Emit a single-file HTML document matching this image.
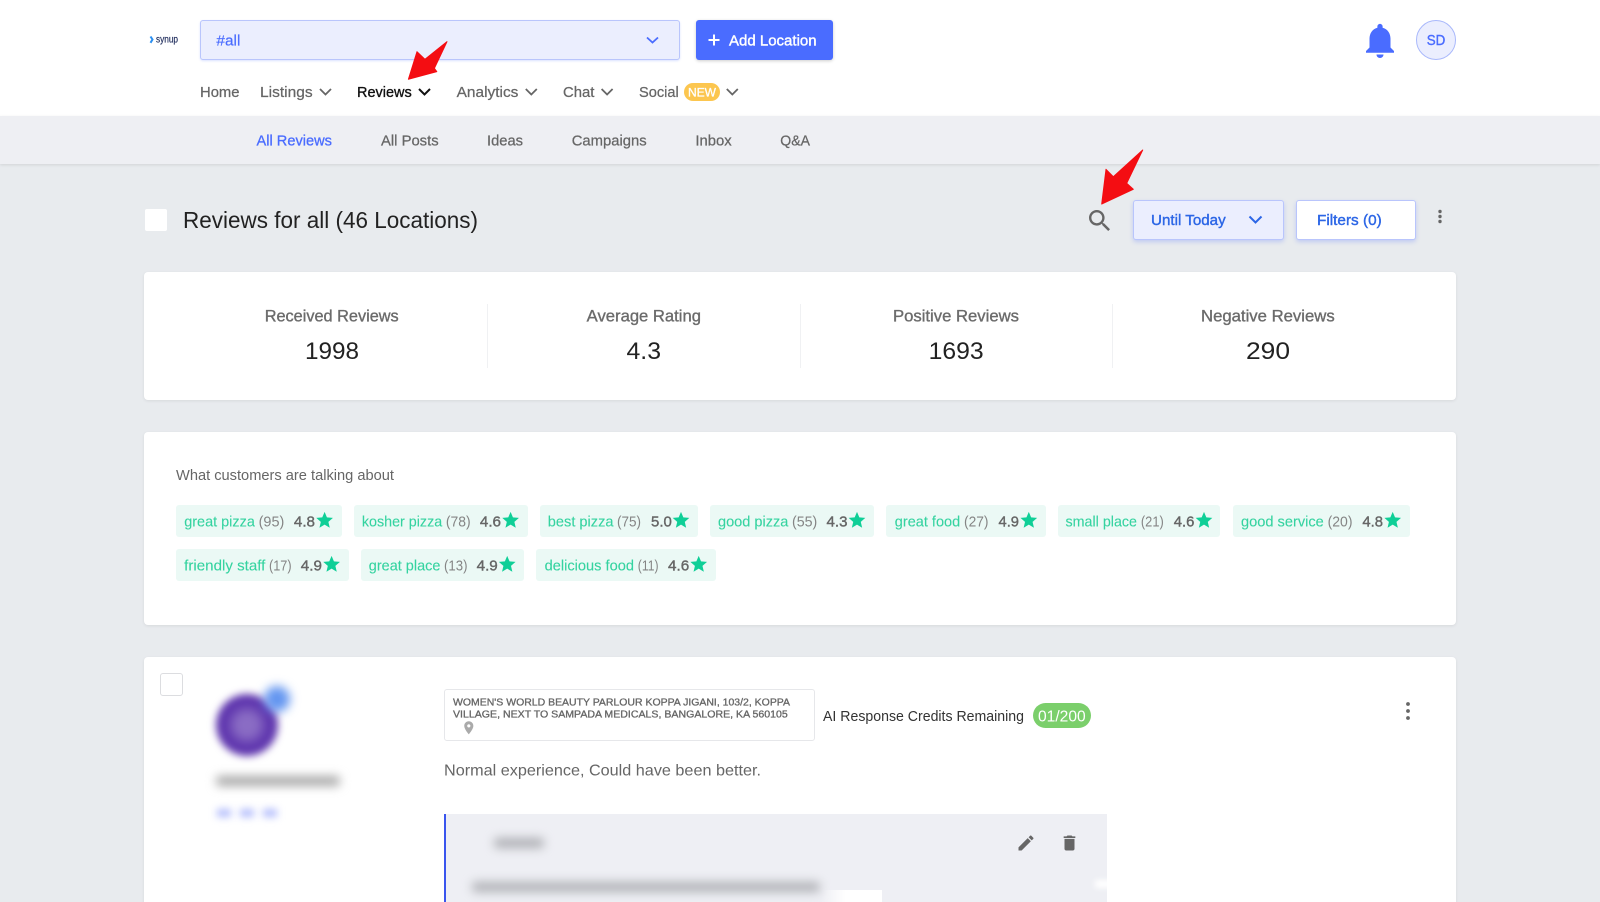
<!DOCTYPE html>
<html lang="en">
<head>
<meta charset="utf-8">
<title>Reviews</title>
<style>
html,body{margin:0;padding:0;width:1600px;height:902px;overflow:hidden;background:#e8ebee;font-family:"Liberation Sans",sans-serif}
#page{position:relative;width:1600px;height:902px;overflow:hidden;background:#e8ebee}
.b{position:absolute;box-sizing:border-box}
svg.t{position:absolute;left:0;top:0;width:1600px;height:902px}
svg text{font-family:"Liberation Sans",sans-serif;font-size:14px;fill:#666}
.n{font-size:15px;fill:#666;stroke:#666;stroke-width:.25px}
.sub{font-size:15px;fill:#666;stroke:#666;stroke-width:.25px}
.tg{fill:#35d3a0;font-size:15px;stroke:#35d3a0;stroke-width:.1px}
.ct{fill:#858585;font-size:15px}
.rt{fill:#666;font-size:15px;stroke:#666;stroke-width:.4px}
.h{font-size:16.300px;fill:#6b6b6b;stroke:#6b6b6b;stroke-width:.35px}
.v{font-size:24.500px;fill:#222}
.tag{background:#ebf9f5;border-radius:3px;height:32px}
.card{background:#fff;border-radius:4px;box-shadow:0 1px 3px rgba(0,0,0,.08)}
</style>
</head>
<body>
<div id="page">
<div class="b" style="left:0;top:0;width:1600px;height:116px;background:#fff"></div>
<div class="b" style="left:0;top:116px;width:1600px;height:48px;background:#eeeff3;box-shadow:0 1px 3px rgba(0,0,0,.1)"></div>

<div class="b" style="left:200px;top:20px;width:480px;height:40px;background:#ebeefe;border:1px solid #b9c5fc;border-radius:3px;box-shadow:0 1px 2px rgba(74,108,255,.2)"></div>
<div class="b" style="left:696px;top:20px;width:137px;height:40px;background:#4a6cff;border-radius:3px;box-shadow:0 1px 3px rgba(0,0,0,.2)"></div>
<div class="b" style="left:684px;top:83px;width:36px;height:18px;background:#fcc64f;border-radius:9px"></div>
<div class="b" style="left:1416px;top:20px;width:40px;height:40px;background:#ebeefe;border:1px solid #a9b8fb;border-radius:50%"></div>

<div class="b" style="left:144.500px;top:209px;width:22px;height:22px;background:#fff;border-radius:2px"></div>
<div class="b" style="left:1133px;top:200px;width:151px;height:40px;background:#ebeefe;border:1px solid #b9c5fc;border-radius:3px;box-shadow:0 2px 4px rgba(74,108,255,.25)"></div>
<div class="b" style="left:1296px;top:200px;width:120px;height:40px;background:#fff;border:1px solid #b9c5fc;border-radius:3px;box-shadow:0 2px 4px rgba(74,108,255,.25)"></div>

<div class="b card" style="left:144px;top:272px;width:1312px;height:128px"></div>
<div class="b" style="left:487px;top:304px;width:1px;height:64px;background:#f0f1f3"></div>
<div class="b" style="left:800px;top:304px;width:1px;height:64px;background:#f0f1f3"></div>
<div class="b" style="left:1112px;top:304px;width:1px;height:64px;background:#f0f1f3"></div>

<div class="b card" style="left:144px;top:432px;width:1312px;height:193px"></div>
<div class="b tag" style="left:176px;top:505px;width:166px"></div>
<div class="b tag" style="left:354px;top:505px;width:174px"></div>
<div class="b tag" style="left:540px;top:505px;width:158px"></div>
<div class="b tag" style="left:710px;top:505px;width:164px"></div>
<div class="b tag" style="left:886px;top:505px;width:160px"></div>
<div class="b tag" style="left:1058px;top:505px;width:162px"></div>
<div class="b tag" style="left:1233px;top:505px;width:177px"></div>
<div class="b tag" style="left:176px;top:549px;width:172.500px"></div>
<div class="b tag" style="left:360.500px;top:549px;width:163.500px"></div>
<div class="b tag" style="left:536px;top:549px;width:179.500px"></div>

<div class="b card" style="left:144px;top:657px;width:1312px;height:260px"></div>
<div class="b" style="left:160px;top:673px;width:23px;height:23px;background:#fff;border:1px solid #dcdde0;border-radius:3px"></div>
<div class="b" style="left:216px;top:694px;width:62px;height:62px;border-radius:50%;background:radial-gradient(circle,#8a6cc4 0 22%,#5f36ae 50%);filter:blur(4px)"></div>
<div class="b" style="left:264px;top:686px;width:26px;height:26px;border-radius:50%;background:#6496f0;filter:blur(5px)"></div>
<div class="b" style="left:216px;top:776px;width:124px;height:10px;background:#a8a8a8;filter:blur(5px);border-radius:4px"></div>
<div class="b" style="left:217px;top:809px;width:14px;height:8px;background:#b3bdfc;filter:blur(4px)"></div>
<div class="b" style="left:240px;top:809px;width:14px;height:8px;background:#b3bdfc;filter:blur(4px)"></div>
<div class="b" style="left:263px;top:809px;width:14px;height:8px;background:#b3bdfc;filter:blur(4px)"></div>
<div class="b" style="left:444px;top:689px;width:371px;height:52px;background:#fff;border:1px solid #e6e7ea;border-radius:3px"></div>
<div class="b" style="left:1033px;top:703px;width:58px;height:25px;background:#7bcf6b;border-radius:13px"></div>

<div class="b" style="left:444px;top:814px;width:663px;height:88px;background:#eeeff4;border-left:2px solid #3a55ee"></div>
<div class="b" style="left:821px;top:890px;width:61px;height:12px;background:linear-gradient(90deg,rgba(255,255,255,0),#fff 40%)"></div>
<div class="b" style="left:494px;top:838px;width:50px;height:10px;background:#aeafb4;filter:blur(5px);border-radius:4px"></div>
<div class="b" style="left:472px;top:882px;width:348px;height:10px;background:#b0b1b6;filter:blur(5px);border-radius:4px"></div>
<div class="b" style="left:1095px;top:880px;width:20px;height:8px;background:#fff;filter:blur(3px)"></div>

<svg class="t" viewBox="0 0 1600 902" xmlns="http://www.w3.org/2000/svg">
<defs>
<symbol id="star" viewBox="0 0 24 24"><path d="M12 17.270L18.180 21l-1.640-7.030L22 9.240l-7.190-.61L12 2 9.190 8.630 2 9.240l5.460 4.730L5.820 21z" fill="#0fcf97"/></symbol>
</defs>

<!-- logo -->
<path d="M150.500 36.500 L152.500 39.500 L150.500 42.800" fill="none" stroke="#2b8ff0" stroke-width="2"/>
<text x="156" y="42.500" textLength="22" lengthAdjust="spacingAndGlyphs" style="font-size:10px;fill:#23305f;stroke:#23305f;stroke-width:.2px">synup</text>

<!-- selector -->
<text x="216.400" y="45.500" textLength="24" lengthAdjust="spacingAndGlyphs" style="font-size:15px;fill:#4a6cff;stroke:#4a6cff;stroke-width:.2px">#all</text>
<path d="M647 37.500l5.500 5 5.500-5" fill="none" stroke="#4a6cff" stroke-width="1.800"/>
<path d="M714 34.500v11M708.500 40h11" stroke="#fff" stroke-width="2"/>
<text x="729" y="45.300" textLength="87.600" lengthAdjust="spacingAndGlyphs" style="font-size:15px;fill:#fff;stroke:#fff;stroke-width:.4px">Add Location</text>

<!-- nav -->
<text x="200" y="97.200" textLength="39.500" lengthAdjust="spacingAndGlyphs" class="n">Home</text>
<text x="260" y="97.200" textLength="52.600" lengthAdjust="spacingAndGlyphs" class="n">Listings</text>
<text x="357" y="97.200" textLength="54.700" lengthAdjust="spacingAndGlyphs" style="font-size:15px;fill:#111;stroke:#111;stroke-width:.35px">Reviews</text>
<text x="456.600" y="97.200" textLength="61.800" lengthAdjust="spacingAndGlyphs" class="n">Analytics</text>
<text x="563" y="97.200" textLength="31.400" lengthAdjust="spacingAndGlyphs" class="n">Chat</text>
<text x="639" y="97.200" textLength="39.800" lengthAdjust="spacingAndGlyphs" class="n">Social</text>
<text x="688" y="96.500" textLength="28" lengthAdjust="spacingAndGlyphs" style="font-size:12px;fill:#fff;stroke:#fff;stroke-width:.3px">NEW</text>
<g fill="none" stroke="#666" stroke-width="1.800">
<path d="M320 89l5.500 5.500 5.500-5.500"/>
<path d="M525.800 89l5.500 5.500 5.500-5.500"/>
<path d="M601.600 89l5.500 5.500 5.500-5.500"/>
<path d="M726.800 89l5.500 5.500 5.500-5.500"/>
</g>
<path d="M419 89l5.500 5.500 5.500-5.500" fill="none" stroke="#111" stroke-width="2"/>

<!-- sub nav -->
<text x="256.500" y="145.300" textLength="75.500" lengthAdjust="spacingAndGlyphs" style="font-size:15px;fill:#4a6cff;stroke:#4a6cff;stroke-width:.3px">All Reviews</text>
<text x="381" y="145.300" textLength="57.600" lengthAdjust="spacingAndGlyphs" class="sub">All Posts</text>
<text x="487" y="145.300" textLength="36" lengthAdjust="spacingAndGlyphs" class="sub">Ideas</text>
<text x="571.700" y="145.300" textLength="75" lengthAdjust="spacingAndGlyphs" class="sub">Campaigns</text>
<text x="695.400" y="145.300" textLength="36.300" lengthAdjust="spacingAndGlyphs" class="sub">Inbox</text>
<text x="780.300" y="145.300" textLength="29.700" lengthAdjust="spacingAndGlyphs" class="sub">Q&amp;A</text>

<!-- top right -->
<svg x="1359" y="19.500" width="42" height="42" viewBox="0 0 24 24"><path fill="#4a6cff" d="M12 22c1.100 0 2-.9 2-2h-4c0 1.100.9 2 2 2zm6-6v-5c0-3.070-1.630-5.640-4.500-6.320V4c0-.83-.67-1.500-1.500-1.500s-1.500.67-1.500 1.500v.68C7.640 5.360 6 7.920 6 11v5l-2 2v1h16v-1l-2-2z"/></svg>
<text x="1426.700" y="45.200" textLength="18.600" lengthAdjust="spacingAndGlyphs" style="font-size:14.500px;fill:#4a6cff;stroke:#4a6cff;stroke-width:.4px">SD</text>

<!-- arrows -->
<polygon fill="#f40d12" stroke="#f40d12" stroke-width="1" stroke-linejoin="round" points="447,41.700 434.400,68.300 436.800,71.700 408.400,79.300 417,51.700 425,59.300"/>
<polygon fill="#f40d12" stroke="#f40d12" stroke-width="1" stroke-linejoin="round" points="1142.700,150 1126.700,183.300 1133.300,189.300 1101.700,204 1106,169.300 1113.300,176.700"/>

<!-- title row -->
<text x="183" y="228" textLength="295" lengthAdjust="spacingAndGlyphs" style="font-size:23px;fill:#222">Reviews for all (46 Locations)</text>
<svg x="1085.400" y="206.400" width="28.800" height="28.800" viewBox="0 0 24 24"><path fill="#666" d="M15.500 14h-.79l-.28-.27C15.410 12.590 16 11.110 16 9.500 16 5.910 13.090 3 9.500 3S3 5.910 3 9.500 5.910 16 9.500 16c1.610 0 3.090-.59 4.230-1.570l.27.28v.79l5 4.990L20.490 19l-4.990-5zm-6 0C7.010 14 5 11.990 5 9.500S7.010 5 9.500 5 14 7.010 14 9.500 11.990 14 9.500 14z"/></svg>
<text x="1151" y="225.200" textLength="74.700" lengthAdjust="spacingAndGlyphs" style="font-size:15px;fill:#2c66e6;stroke:#2c66e6;stroke-width:.4px">Until Today</text>
<path d="M1249.500 216.500l6 6 6-6" fill="none" stroke="#2c66e6" stroke-width="2"/>
<text x="1317" y="225.200" textLength="64.700" lengthAdjust="spacingAndGlyphs" style="font-size:15px;fill:#2c66e6;stroke:#2c66e6;stroke-width:.4px">Filters (0)</text>
<g fill="#666"><circle cx="1440" cy="211.500" r="1.700"/><circle cx="1440" cy="216.500" r="1.700"/><circle cx="1440" cy="221.500" r="1.700"/></g>

<!-- stats -->
<text x="264.700" y="321.500" textLength="134" lengthAdjust="spacingAndGlyphs" class="h">Received Reviews</text>
<text x="305" y="359" textLength="54" lengthAdjust="spacingAndGlyphs" class="v">1998</text>
<text x="586.700" y="321.500" textLength="114.300" lengthAdjust="spacingAndGlyphs" class="h">Average Rating</text>
<text x="626.500" y="359" textLength="34.500" lengthAdjust="spacingAndGlyphs" class="v">4.3</text>
<text x="893" y="321.500" textLength="126" lengthAdjust="spacingAndGlyphs" class="h">Positive Reviews</text>
<text x="928.600" y="359" textLength="55" lengthAdjust="spacingAndGlyphs" class="v">1693</text>
<text x="1201" y="321.500" textLength="133.700" lengthAdjust="spacingAndGlyphs" class="h">Negative Reviews</text>
<text x="1246" y="359" textLength="44" lengthAdjust="spacingAndGlyphs" class="v">290</text>

<!-- tags -->
<text x="176" y="480" textLength="218" lengthAdjust="spacingAndGlyphs" style="font-size:14.500px;fill:#666">What customers are talking about</text>

<text x="184.200" y="526.500" textLength="70.700" lengthAdjust="spacingAndGlyphs" class="tg">great pizza</text>
<text x="258.600" y="526.500" textLength="25.700" lengthAdjust="spacingAndGlyphs" class="ct">(95)</text>
<text x="293.900" y="526.500" textLength="21.100" lengthAdjust="spacingAndGlyphs" class="rt">4.8</text>
<use href="#star" x="314.600" y="510.200" width="20" height="20"/>

<text x="361.900" y="526.500" textLength="80.300" lengthAdjust="spacingAndGlyphs" class="tg">kosher pizza</text>
<text x="445.900" y="526.500" textLength="24.800" lengthAdjust="spacingAndGlyphs" class="ct">(78)</text>
<text x="479.900" y="526.500" textLength="21.100" lengthAdjust="spacingAndGlyphs" class="rt">4.6</text>
<use href="#star" x="500.600" y="510.200" width="20" height="20"/>

<text x="547.800" y="526.500" textLength="65.700" lengthAdjust="spacingAndGlyphs" class="tg">best pizza</text>
<text x="617" y="526.500" textLength="24" lengthAdjust="spacingAndGlyphs" class="ct">(75)</text>
<text x="651" y="526.500" textLength="20.800" lengthAdjust="spacingAndGlyphs" class="rt">5.0</text>
<use href="#star" x="671" y="510.200" width="20" height="20"/>

<text x="718" y="526.500" textLength="70.400" lengthAdjust="spacingAndGlyphs" class="tg">good pizza</text>
<text x="792" y="526.500" textLength="25.300" lengthAdjust="spacingAndGlyphs" class="ct">(55)</text>
<text x="826.500" y="526.500" textLength="21" lengthAdjust="spacingAndGlyphs" class="rt">4.3</text>
<use href="#star" x="847" y="510.200" width="20" height="20"/>

<text x="894.800" y="526.500" textLength="65.400" lengthAdjust="spacingAndGlyphs" class="tg">great food</text>
<text x="964" y="526.500" textLength="24.500" lengthAdjust="spacingAndGlyphs" class="ct">(27)</text>
<text x="998.500" y="526.500" textLength="20.500" lengthAdjust="spacingAndGlyphs" class="rt">4.9</text>
<use href="#star" x="1018.800" y="510.200" width="20" height="20"/>

<text x="1065.500" y="526.500" textLength="71.500" lengthAdjust="spacingAndGlyphs" class="tg">small place</text>
<text x="1140.900" y="526.500" textLength="22.900" lengthAdjust="spacingAndGlyphs" class="ct">(21)</text>
<text x="1173.800" y="526.500" textLength="20.600" lengthAdjust="spacingAndGlyphs" class="rt">4.6</text>
<use href="#star" x="1194" y="510.200" width="20" height="20"/>

<text x="1241" y="526.500" textLength="82.800" lengthAdjust="spacingAndGlyphs" class="tg">good service</text>
<text x="1327.600" y="526.500" textLength="24.900" lengthAdjust="spacingAndGlyphs" class="ct">(20)</text>
<text x="1362.400" y="526.500" textLength="20.600" lengthAdjust="spacingAndGlyphs" class="rt">4.8</text>
<use href="#star" x="1382.700" y="510.200" width="20" height="20"/>

<text x="184.200" y="570.500" textLength="81.200" lengthAdjust="spacingAndGlyphs" class="tg">friendly staff</text>
<text x="269" y="570.500" textLength="22.600" lengthAdjust="spacingAndGlyphs" class="ct">(17)</text>
<text x="300.800" y="570.500" textLength="21.100" lengthAdjust="spacingAndGlyphs" class="rt">4.9</text>
<use href="#star" x="321.600" y="554.200" width="20" height="20"/>

<text x="368.800" y="570.500" textLength="71.600" lengthAdjust="spacingAndGlyphs" class="tg">great place</text>
<text x="444" y="570.500" textLength="23.500" lengthAdjust="spacingAndGlyphs" class="ct">(13)</text>
<text x="476.600" y="570.500" textLength="21.200" lengthAdjust="spacingAndGlyphs" class="rt">4.9</text>
<use href="#star" x="497.200" y="554.200" width="20" height="20"/>

<text x="544.600" y="570.500" textLength="89.400" lengthAdjust="spacingAndGlyphs" class="tg">delicious food</text>
<text x="637.800" y="570.500" textLength="20.700" lengthAdjust="spacingAndGlyphs" class="ct">(11)</text>
<text x="668" y="570.500" textLength="21.200" lengthAdjust="spacingAndGlyphs" class="rt">4.6</text>
<use href="#star" x="688.700" y="554.200" width="20" height="20"/>

<!-- review -->
<text x="453" y="705.500" textLength="337" lengthAdjust="spacingAndGlyphs" style="font-size:10px;fill:#666;stroke:#666;stroke-width:.3px">WOMEN'S WORLD BEAUTY PARLOUR KOPPA JIGANI, 103/2, KOPPA</text>
<text x="453" y="717.500" textLength="334.800" lengthAdjust="spacingAndGlyphs" style="font-size:10px;fill:#666;stroke:#666;stroke-width:.3px">VILLAGE, NEXT TO SAMPADA MEDICALS, BANGALORE, KA 560105</text>
<svg x="461" y="720" width="15.600" height="15.600" viewBox="0 0 24 24"><path fill="#aaa" d="M12 2C8.130 2 5 5.130 5 9c0 5.250 7 13 7 13s7-7.750 7-13c0-3.870-3.130-7-7-7zm0 9.500c-1.380 0-2.500-1.120-2.500-2.500s1.120-2.500 2.500-2.500 2.500 1.120 2.500 2.500-1.120 2.500-2.500 2.500z"/></svg>
<text x="823" y="721" textLength="201" lengthAdjust="spacingAndGlyphs" style="font-size:14.500px;fill:#333">AI Response Credits Remaining</text>
<text x="1038" y="721.500" textLength="47.700" lengthAdjust="spacingAndGlyphs" style="font-size:16px;fill:#fff">01/200</text>
<text x="444" y="775.500" textLength="317" lengthAdjust="spacingAndGlyphs" style="font-size:16px;fill:#666">Normal experience, Could have been better.</text>
<g fill="#666"><circle cx="1408" cy="704" r="1.900"/><circle cx="1408" cy="711" r="1.900"/><circle cx="1408" cy="718" r="1.900"/></g>
<svg x="1016" y="833" width="20" height="20" viewBox="0 0 24 24"><path fill="#666" d="M3 17.250V21h3.750L17.810 9.940l-3.750-3.750L3 17.250zM20.710 7.040c.39-.39.39-1.020 0-1.410l-2.340-2.340c-.39-.39-1.020-.39-1.410 0l-1.830 1.830 3.750 3.750 1.830-1.830z"/></svg>
<svg x="1059.500" y="833" width="20" height="20" viewBox="0 0 24 24"><path fill="#666" d="M6 19c0 1.100.9 2 2 2h8c1.100 0 2-.9 2-2V7H6v12zM19 4h-3.500l-1-1h-5l-1 1H5v2h14V4z"/></svg>
</svg>
</div>
</body>
</html>
